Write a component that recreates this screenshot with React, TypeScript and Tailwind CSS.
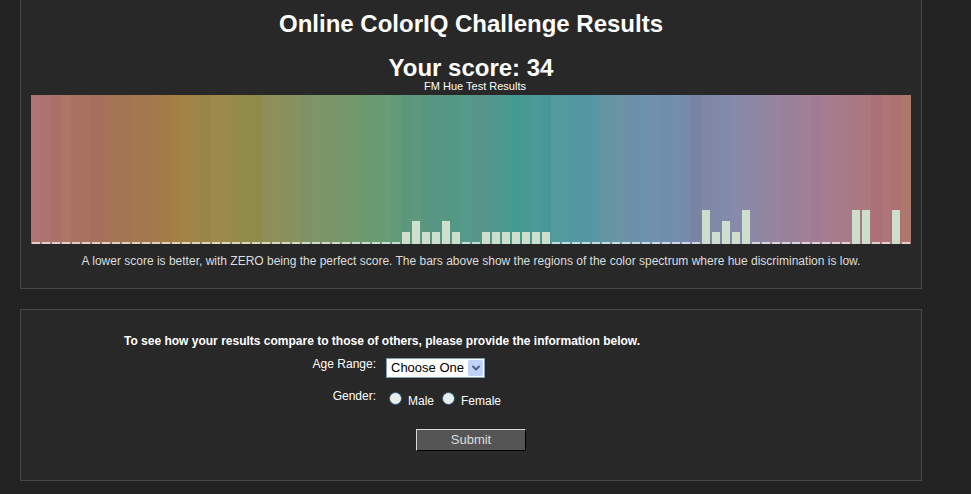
import { useState } from 'react';
import { ChevronDown } from 'lucide-react';

const hues = [
  '#ae7472', '#ad7371', '#aa7068', '#ad7565', '#a87261', '#a7725f', '#a5705b', '#a57159',
  '#a37555', '#a27652', '#a57851', '#a4784f', '#a47b4d', '#a47b47', '#a28045', '#a18346',
  '#9e8447', '#9a8446', '#9d8a4b', '#9b8b4b', '#948a49', '#8f8c48', '#8f8b49', '#8f8e57',
  '#8d9059', '#8a905b', '#889261', '#819165', '#7c9669', '#7b9568', '#79956b', '#76966b',
  '#72986d', '#6a996f', '#689b72', '#689c77', '#619a76', '#5b977a', '#5d987f', '#589680',
  '#599784', '#579885', '#549986', '#559a8a', '#579689', '#57978b', '#51998e', '#4b9a8f',
  '#439993', '#48998f', '#4b9998', '#4a9799', '#519a9e', '#519a9f', '#5297a2', '#5297a2',
  '#5897a5', '#6296a0', '#6895a2', '#6e91a7', '#6b90a9', '#6e92ad', '#7090ac', '#708dab',
  '#758ead', '#768bab', '#7984a3', '#8087a6', '#8088a8', '#8389ab', '#8989a9', '#8d88a7',
  '#8d88a4', '#9486a0', '#97849e', '#98829a', '#9b8197', '#a48098', '#9f7c92', '#a67c90',
  '#a67b8b', '#a77a87', '#a97882', '#ab7880', '#ac7178', '#ae7477', '#ad7270', '#ae776e',
];

// column index -> error score, every other column is zero
const errors: Record<number, number> = {
  37: 1, 38: 2, 39: 1, 40: 1, 41: 2, 42: 1,
  45: 1, 46: 1, 47: 1, 48: 1, 49: 1, 50: 1, 51: 1,
  67: 3, 68: 1, 69: 2, 70: 1, 71: 3,
  82: 3, 83: 3, 86: 3,
};

const barStyles = [
  'h-0.5 bg-white/65',
  'h-3 bg-[#cfdfce]',
  'h-[23px] bg-[#cfdfce]',
  'h-[34px] bg-[#cbdfcb]',
];

function HueChart() {
  return (
    <div role="img" aria-label="FM Hue Test Results" className="flex h-[149px] w-full">
      {hues.map((color, i) => (
        <div key={i} className="flex flex-1 items-end px-px" style={{ backgroundColor: color }}>
          <div className={`w-full ${barStyles[errors[i] ?? 0]}`} />
        </div>
      ))}
    </div>
  );
}

function GenderOption({ label, checked, onChange }: { label: string; checked: boolean; onChange: () => void }) {
  return (
    <label className="flex items-center gap-1.5">
      <input
        type="radio"
        name="gender"
        value={label}
        checked={checked}
        onChange={onChange}
        className="mb-1 h-[13px] w-[13px] appearance-none rounded-full border border-[#35566e] bg-[#e8efef] checked:border-4"
      />
      {label}
    </label>
  );
}

export default function App() {
  const [age, setAge] = useState('');
  const [gender, setGender] = useState('');

  return (
    <div className="min-h-screen bg-[#222222] pb-3 font-['Liberation_Sans',Arial,sans-serif] text-xs text-white">
      <main className="mr-[49px] ml-5 flex flex-col gap-5">
        <section className="border-x border-b border-[#484848] bg-[#282828] px-2.5 pt-2 pb-[19px] text-center">
          <h1 className="text-2xl leading-8 font-bold">Online ColorIQ Challenge Results</h1>
          <h2 className="mt-4 text-2xl leading-6 font-bold">Your score: 34</h2>
          <p className="mb-[3px] pl-2 text-[11px] leading-3">FM Hue Test Results</p>
          <HueChart />
          <p className="mt-[9px] leading-4 text-[#dddddd]">
            A lower score is better, with ZERO being the perfect score. The bars above show the regions of the color
            spectrum where hue discrimination is low.
          </p>
        </section>

        <section className="border border-[#484848] bg-[#282828] pt-[23px] pb-[29px]">
          <form onSubmit={(e) => e.preventDefault()}>
            <p className="ml-[103px] leading-4 font-bold">
              To see how your results compare to those of others, please provide the information below.
            </p>

            <div className="mt-[7px] grid grid-cols-[355px_1fr] gap-x-2.5">
              <label htmlFor="age" className="text-right leading-4">Age Range:</label>
              <div className="relative mt-0.5 w-[99px]">
                <select
                  id="age"
                  value={age}
                  onChange={(e) => setAge(e.target.value)}
                  className="block h-5 w-full appearance-none border border-[#7f9db9] bg-white pl-1 text-[13px] text-black"
                >
                  <option value="">Choose One</option>
                  <option value="0-19">0-19</option>
                  <option value="20-29">20-29</option>
                  <option value="30-39">30-39</option>
                  <option value="40-49">40-49</option>
                  <option value="50-59">50-59</option>
                  <option value="60+">60+</option>
                </select>
                <span className="pointer-events-none absolute top-0.5 right-0.5 flex h-4 w-[15px] items-center justify-center rounded-xs bg-[#c1d2fa]">
                  <ChevronDown className="h-3 w-3 text-[#4d6185]" strokeWidth={4} />
                </span>
              </div>
            </div>

            <div className="mt-2.5 grid grid-cols-[355px_1fr] gap-x-[13px]">
              <span className="text-right leading-4">Gender:</span>
              <div role="radiogroup" aria-label="Gender" className="mt-1 flex gap-2 leading-4">
                <GenderOption label="Male" checked={gender === 'Male'} onChange={() => setGender('Male')} />
                <GenderOption label="Female" checked={gender === 'Female'} onChange={() => setGender('Female')} />
              </div>
            </div>

            <button
              type="submit"
              className="mx-auto mt-5 block h-[22px] w-[110px] border border-t-[#d8d8d8] border-r-black border-b-black border-l-[#d8d8d8] bg-[#555555] text-[13px] leading-5 text-[#dddddd]"
            >
              Submit
            </button>
          </form>
        </section>
      </main>
    </div>
  );
}
